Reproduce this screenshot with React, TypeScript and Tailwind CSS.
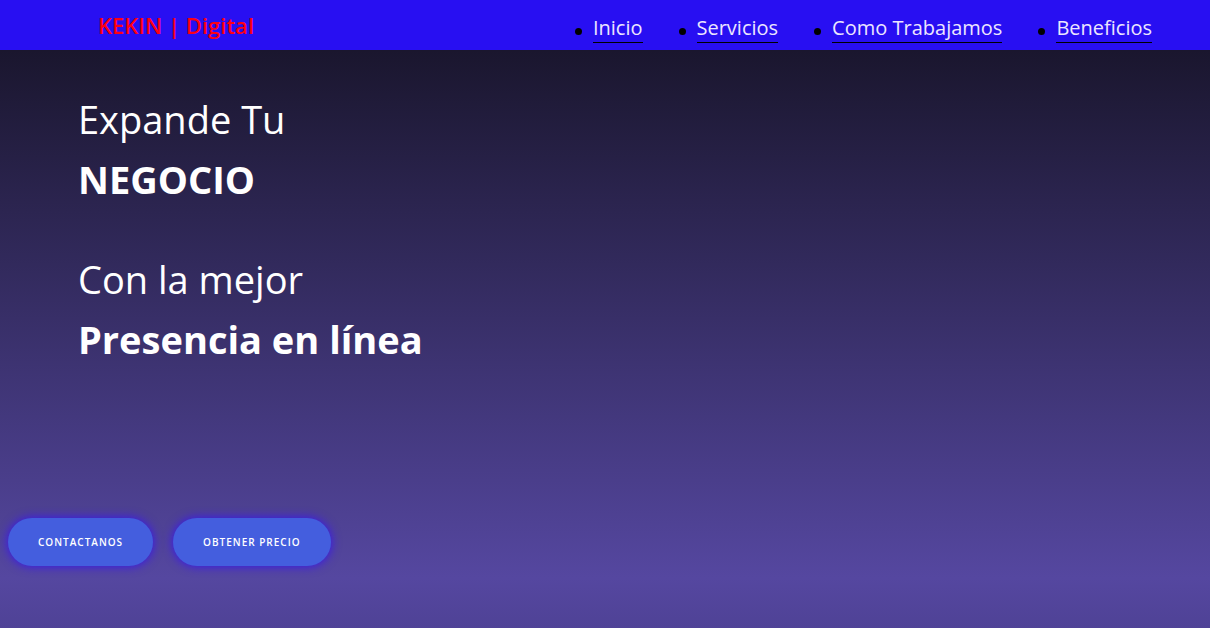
const links = [
  { label: "Inicio", href: "#inicio" },
  { label: "Servicios", href: "#servicios" },
  { label: "Como Trabajamos", href: "#como-trabajamos" },
  { label: "Beneficios", href: "#beneficios" },
];

const actions = ["Contactanos", "Obtener precio"];

function Header() {
  return (
    <header className="flex min-h-[50px] flex-wrap items-center justify-between bg-[#280ff2] pr-[58px] pl-[98px]">
      <a href="#inicio" className="text-[22px] leading-[30px] font-semibold text-[#ff0012]">
        KEKIN | Digital
      </a>
      <nav aria-label="Principal">
        <ul className="flex flex-wrap gap-x-9 pt-2">
          {links.map((link) => (
            <li
              key={link.label}
              className="flex items-center gap-[11px] before:mt-1 before:size-[7px] before:rounded-full before:bg-black"
            >
              <a href={link.href} className="border-b border-black pb-px text-[20px] leading-[26px] text-[#ece6ff]">
                {link.label}
              </a>
            </li>
          ))}
        </ul>
      </nav>
    </header>
  );
}

export default function App() {
  return (
    <div className="flex min-h-screen flex-col bg-[linear-gradient(180deg,#1a162e_8%,#5547a0_92%,#4f4296_100%)] font-['Open_Sans','Noto_Sans',sans-serif]">
      <Header />
      <main className="flex flex-col">
        <h1 className="px-[78px] pt-[39px] text-[38px] leading-[60px] font-normal text-white">
          Expande Tu
          <br />
          <strong className="font-bold">NEGOCIO</strong>
        </h1>
        <p className="px-[78px] pt-10 text-[38px] leading-[60px] text-white">
          Con la mejor
          <br />
          <strong className="font-bold">Presencia en línea</strong>
        </p>
        <div className="mt-[149px] flex flex-wrap gap-5 px-2">
          {actions.map((action) => (
            <button
              key={action}
              type="button"
              className="h-12 rounded-3xl bg-[#445ede] px-[30px] text-[10px] font-semibold tracking-[1px] text-white uppercase shadow-[0_0_10px_1px_#3c1be6]"
            >
              {action}
            </button>
          ))}
        </div>
      </main>
    </div>
  );
}
